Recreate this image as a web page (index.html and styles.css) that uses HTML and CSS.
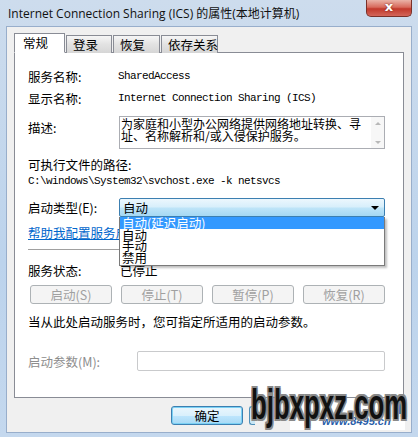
FILE: index.html
```html
<!DOCTYPE html>
<html lang="zh-CN">
<head>
<meta charset="UTF-8">
<title>Internet Connection Sharing (ICS) 的属性(本地计算机)</title>
<link rel="stylesheet" href="styles.css">
</head>
<body>

<div class="window">
  <div class="titlebar">
    <span class="title">Internet Connection Sharing (ICS) 的属性(本地计算机)</span>
    <div class="close">x</div>
  </div>

  <div class="client">
    <div class="tabs">
      <div class="tab active">常规</div>
      <div class="tab">登录</div>
      <div class="tab">恢复</div>
      <div class="tab">依存关系</div>
    </div>

    <div class="panel">
      <div class="row">
        <span class="label">服务名称:</span>
        <span class="mono">SharedAccess</span>
      </div>
      <div class="row">
        <span class="label">显示名称:</span>
        <span class="mono">Internet Connection Sharing (ICS)</span>
      </div>
      <div class="row desc-row">
        <span class="label">描述:</span>
        <div class="desc">
          <div class="desc-text">为家庭和小型办公网络提供网络地址转换、寻址、名称解析和/或入侵保护服务。</div>
          <div class="scroll">
            <span class="arrow up"></span>
            <span class="arrow down"></span>
          </div>
        </div>
      </div>

      <div class="path-label">可执行文件的路径:</div>
      <div class="mono path">C:\windows\System32\svchost.exe -k netsvcs</div>

      <div class="row start-row">
        <span class="label">启动类型(E):</span>
        <div class="combo">
          <div class="combo-box">
            <span>自动</span>
            <span class="combo-arrow"></span>
          </div>
          <ul class="combo-list">
            <li class="selected">自动(延迟启动)</li>
            <li>自动</li>
            <li>手动</li>
            <li>禁用</li>
          </ul>
        </div>
      </div>

      <a class="help-link" href="#">帮助我配置服务启动选项。</a>
      <div class="separator"></div>

      <div class="row status-row">
        <span class="label">服务状态:</span>
        <span class="status">已停止</span>
      </div>

      <div class="buttons">
        <button class="btn" disabled>启动(S)</button>
        <button class="btn" disabled>停止(T)</button>
        <button class="btn" disabled>暂停(P)</button>
        <button class="btn" disabled>恢复(R)</button>
      </div>

      <p class="hint">当从此处启动服务时，您可指定所适用的启动参数。</p>

      <div class="row param-row">
        <span class="label param-label">启动参数(M):</span>
        <div class="param-input"></div>
      </div>
    </div>

    <div class="footer">
      <button class="btn default">确定</button>
      <span class="btn-edge"></span>
    </div>
  </div>

  <!-- watermark stamped on the screenshot -->
  <div class="watermark">
    <div class="wm-box">
      <span class="wm-mark"></span>
      <span class="wm-site">www.8495.cn</span>
    </div>
    <span class="wm-text">bjbxpxz.com</span>
  </div>
</div>

</body>
</html>
```

FILE: styles.css
```css
body {
    margin: 0;
    font-family: "Noto Sans CJK SC", sans-serif;
    font-size: 12.5px;
    color: #000;
}

.window {
    position: relative;
    width: 418px;
    height: 437px;
    overflow: hidden;
    background: linear-gradient(to bottom, #cddced, #bcd3ec 60%, #c4d8ee);
}

.titlebar {
    height: 27px;
    display: flex;
    justify-content: space-between;
    align-items: flex-start;
}

.title {
    padding-left: 8px;
    line-height: 27px;
    font-family: "Open Sans", "Noto Sans CJK SC", sans-serif;
    font-size: 12px;
    color: #111;
}

.close {
    width: 44px;
    height: 16px;
    margin-right: 6px;
    border: 1px solid #7a3028;
    border-top: none;
    border-radius: 0 0 5px 5px;
    background: linear-gradient(to bottom, #eab3a8, #d86a5c 45%, #c2392c 55%, #d3665a);
    color: #fff;
    font-family: "DejaVu Sans", sans-serif;
    font-weight: bold;
    font-size: 13px;
    line-height: 14px;
    text-align: center;
    text-shadow: 0 0 2px #6b1a12;
}

.client {
    margin: 0 7px;
    height: 405px;
    background: #f0f0f0;
    box-shadow: 0 0 0 1px #98aecb;
    box-sizing: border-box;
}

.tabs {
    display: flex;
    align-items: flex-end;
    padding: 6px 0 0 7px;
    height: 26px;
    box-sizing: border-box;
    position: relative;
    z-index: 1;
    margin-bottom: -1px;
}

.tab {
    height: 18px;
    line-height: 18px;
    padding-left: 6px;
    white-space: nowrap;
    border: 1px solid #898c95;
    border-bottom: none;
    background: linear-gradient(to bottom, #f6f6f6, #e2e2e2 50%, #d6d6d6);
    box-sizing: border-box;
    margin-left: 1px;
}

.tab:nth-child(2) { width: 46px; }
.tab:nth-child(3) { width: 47px; }
.tab:nth-child(4) { width: 57px; }

.tab.active {
    width: 51px;
    height: 20px;
    line-height: 17px;
    padding-left: 8px;
    margin-left: 0;
    background: #fff;
    border-bottom: 1px solid #fff;
}

.panel {
    margin: 0 7px;
    height: 346px;
    box-sizing: border-box;
    border: 1px solid #898c95;
    background: #fff;
    padding: 12px 18px 0 13px;
}

.row {
    display: flex;
    align-items: center;
    height: 22px;
}

.label {
    width: 91px;
    flex-shrink: 0;
}

.mono {
    font-family: "Liberation Mono", monospace;
    font-size: 11px;
    letter-spacing: -0.6px;
    margin-left: -1px;
}

.desc-row {
    align-items: flex-start;
    height: auto;
    margin-top: 7px;
}

.desc-row .label {
    margin-top: 5px;
    line-height: 14px;
}

.desc {
    display: flex;
    width: 266px;
    height: 33px;
    border: 1px solid #abadb3;
    box-sizing: border-box;
}

.desc-text {
    flex: 1;
    padding: 1px 0 0 1px;
    font-size: 12px;
    line-height: 11.5px;
}

.scroll {
    width: 13px;
    flex-shrink: 0;
    display: flex;
    flex-direction: column;
    justify-content: space-between;
    align-items: center;
    padding: 5px 0 4px;
    background: #f7f7f7;
}

.arrow {
    width: 0;
    height: 0;
    border-left: 3px solid transparent;
    border-right: 3px solid transparent;
}

.arrow.up { border-bottom: 3px solid #b8b8b8; }
.arrow.down { border-top: 3px solid #b8b8b8; }

.path-label {
    margin-top: 8px;
    line-height: 16px;
}

.path {
    line-height: 16px;
    margin-left: 0;
}

.start-row {
    margin-top: 9px;
    height: 19px;
}

.combo {
    position: relative;
    width: 266px;
}

.combo-box {
    height: 19px;
    box-sizing: border-box;
    border: 1px solid #3c7fb1;
    border-radius: 2px;
    background: linear-gradient(to bottom, #ecf7fd, #d8effb 45%, #bde4f8 55%, #a5d8f3);
    display: flex;
    justify-content: space-between;
    align-items: center;
    padding: 0 5px 0 3px;
}

.combo-arrow {
    width: 0;
    height: 0;
    border-left: 4px solid transparent;
    border-right: 4px solid transparent;
    border-top: 4px solid #000;
}

.combo-list {
    position: absolute;
    top: 19px;
    left: 0;
    right: 0;
    margin: 0;
    padding: 0 0 2px;
    list-style: none;
    background: #fff;
    border: 1px solid #7a7a7a;
    border-top: none;
    box-shadow: 2px 2px 2px rgba(0, 0, 0, 0.25);
    z-index: 2;
}

.combo-list li {
    line-height: 11.5px;
    padding-left: 2px;
}

.combo-list li.selected {
    background: #3399ff;
    color: #fff;
}

.help-link {
    display: block;
    margin-top: 8px;
    line-height: 16px;
    color: #0066cc;
}

.separator {
    margin-top: 8px;
    height: 1px;
    background: #a0a0a0;
}

.status-row {
    margin-top: 12px;
    height: 16px;
}

.status {
    margin-left: 1px;
}

.buttons {
    display: grid;
    grid-template-columns: repeat(4, 1fr);
    gap: 9px;
    margin: 7px 0 0 2px;
}

.btn {
    height: 19px;
    padding: 0;
    border: 1px solid #707070;
    border-radius: 3px;
    background: linear-gradient(to bottom, #f2f2f2, #ebebeb 50%, #dddddd 51%, #cfcfcf);
    font-family: "Noto Sans CJK SC", sans-serif;
    font-size: 12.5px;
    line-height: 16px;
    color: #000;
}

.btn:disabled {
    border-color: #adb2b5;
    background: #f4f4f4;
    color: #a0a0a0;
}

.hint {
    margin: 10px 0 0;
    line-height: 16px;
}

.param-row {
    margin-top: 21px;
    height: 20px;
}

.param-label {
    width: 109px;
    color: #8d8d8d;
}

.param-input {
    flex: 1;
    height: 20px;
    box-sizing: border-box;
    border: 1px solid #c9cacc;
    border-radius: 2px;
}

.footer {
    display: flex;
    gap: 6px;
    padding: 8px 0 0 164px;
}

.footer .btn {
    width: 72px;
}

.btn-edge {
    width: 6px;
    height: 19px;
    box-sizing: border-box;
    border: 1px solid #4e8fb8;
    border-right: none;
    border-radius: 3px 0 0 3px;
    background: #c9e7f5;
}

.btn.default {
    border-color: #3c7fb1;
    background: linear-gradient(to bottom, #eaf6fd, #d9f0fc 50%, #bee6fd 51%, #a7d9f5);
    box-shadow: inset 0 0 0 1px #7bd1f4;
}

.watermark {
    position: absolute;
    left: 248px;
    top: 380px;
    width: 170px;
    height: 57px;
}

.wm-box {
    position: absolute;
    left: 42px;
    top: 18px;
    width: 115px;
    height: 32px;
    background: #fff;
}

.wm-mark {
    position: absolute;
    right: 0;
    top: 2px;
    width: 10px;
    height: 14px;
    border-radius: 3px;
    background: #3a6fb8;
}

.wm-site {
    position: absolute;
    left: 32px;
    bottom: 3px;
    font-family: "Liberation Sans", sans-serif;
    font-style: italic;
    font-weight: bold;
    font-size: 11px;
    color: #2a5ea8;
}

.wm-text {
    position: absolute;
    left: 3px;
    top: 0;
    font-family: "Liberation Sans", sans-serif;
    font-weight: bold;
    font-size: 43px;
    line-height: 48px;
    color: #111;
    transform: scaleX(0.6);
    transform-origin: left top;
    text-shadow: 2px 0 0 #8a8a8a, -2px 0 0 #8a8a8a, 0 2px 0 #8a8a8a, 0 -2px 0 #8a8a8a,
                 2px 2px 0 #8a8a8a, -2px -2px 0 #8a8a8a, 2px -2px 0 #8a8a8a, -2px 2px 0 #8a8a8a;
}
```
